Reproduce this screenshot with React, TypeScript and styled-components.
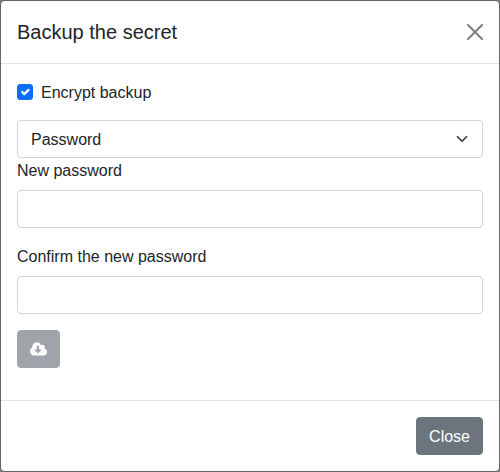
import React, { useState } from "react";
import styled, { createGlobalStyle } from "styled-components";

const GlobalStyle = createGlobalStyle`
  *, *::before, *::after { box-sizing: border-box; }
  body {
    margin: 0;
    background: #7f7f7f;
    color: #212529;
    font: 400 16px/1.5 "Liberation Sans", Arial, sans-serif;
  }
`;

const Dialog = styled.section`
  display: flex;
  flex-direction: column;
  width: 500px;
  height: 472px;
  border: 1px solid rgba(0, 0, 0, 0.2);
  border-radius: 4.8px;
  background: #fff;
  background-clip: padding-box;
`;

const Header = styled.header`
  display: flex;
  align-items: center;
  justify-content: space-between;
  padding: 16px;
  border-bottom: 1px solid #dee2e6;
`;

const Title = styled.h5`
  margin: 0;
  font-size: 20px;
  font-weight: 400;
  line-height: 30px;
`;

const Dismiss = styled.button`
  display: flex;
  padding: 8px;
  margin: -8px;
  border: 0;
  background: transparent;
  color: #000;
  opacity: 0.5;
`;

const Body = styled.div`
  flex: 1;
  padding: 16px;
`;

const Check = styled.label`
  display: flex;
  gap: 8px;
  height: 24px;
  margin-bottom: 16px;
  line-height: 26px;
`;

const HiddenCheckbox = styled.input`
  appearance: none;
  width: 0;
  height: 0;
  margin: 0 -8px 0 0;
`;

const CheckMark = styled.span<{ $checked: boolean }>`
  display: flex;
  width: 16px;
  height: 16px;
  margin-top: 4px;
  border: 1px solid ${(p) => (p.$checked ? "#0d6efd" : "rgba(0,0,0,0.25)")};
  border-radius: 3px;
  background: ${(p) => (p.$checked ? "#0d6efd" : "#fff")};
`;

const SelectBox = styled.div`
  display: grid;
  align-items: center;

  > * { grid-area: 1 / 1; }
  > svg { justify-self: end; margin-right: 13px; pointer-events: none; }
`;

const Select = styled.select`
  appearance: none;
  width: 100%;
  height: 38px;
  padding: 7px 36px 5px 13px;
  border: 1px solid #ced4da;
  border-radius: 4px;
  background: #fff;
  color: #212529;
  font: inherit;
`;

const Field = styled.div`
  display: flex;
  flex-direction: column;
  margin-bottom: 16px;
`;

const Label = styled.label`
  height: 24px;
  margin-bottom: 8px;
  line-height: 26px;
`;

const Input = styled.input`
  height: 38px;
  padding: 6px 12px;
  border: 1px solid #ced4da;
  border-radius: 4px;
  background: #fff;
  font: inherit;
`;

const Button = styled.button`
  display: inline-flex;
  align-items: center;
  justify-content: center;
  height: 38px;
  padding: 7px 12px 5px;
  border: 1px solid #6c757d;
  border-radius: 4px;
  background: #6c757d;
  color: #fff;
  font: inherit;

  &:disabled { opacity: 0.65; }
`;

const DownloadButton = styled(Button)`
  width: 43px;
  padding: 6px 12px;
`;

const DownloadIcon = styled.svg`
  flex: none;
  width: 17px;
  height: 17px;
`;

const Footer = styled.footer`
  display: flex;
  justify-content: flex-end;
  padding: 16px;
  border-top: 1px solid #dee2e6;
`;

export default function App() {
  const [encrypted, setEncrypted] = useState(true);

  return (
    <>
      <GlobalStyle />
      <Dialog role="dialog" aria-labelledby="dialog-title">
        <Header>
          <Title id="dialog-title">Backup the secret</Title>
          <Dismiss type="button" aria-label="Close">
            <svg width="16" height="16" viewBox="0 0 16 16" fill="currentColor">
              <path d="M.293.293a1 1 0 011.414 0L8 6.586 14.293.293a1 1 0 111.414 1.414L9.414 8l6.293 6.293a1 1 0 01-1.414 1.414L8 9.414l-6.293 6.293a1 1 0 01-1.414-1.414L6.586 8 .293 1.707a1 1 0 010-1.414z" />
            </svg>
          </Dismiss>
        </Header>
        <Body>
          <Check>
            <HiddenCheckbox
              type="checkbox"
              checked={encrypted}
              onChange={(e) => setEncrypted(e.target.checked)}
            />
            <CheckMark $checked={encrypted}>
              {encrypted && (
                <svg width="14" height="14" viewBox="0 0 20 20" fill="none">
                  <path d="M6 10l3 3l6-6" stroke="#fff" strokeWidth="3.3" strokeLinecap="round" strokeLinejoin="round" />
                </svg>
              )}
            </CheckMark>
            Encrypt backup
          </Check>
          <SelectBox>
            <Select aria-label="Encryption method" defaultValue="password">
              <option value="password">Password</option>
            </Select>
            <svg width="16" height="12" viewBox="0 0 16 16" fill="none">
              <path d="M2 5l6 6 6-6" stroke="#343a40" strokeWidth="2.2" strokeLinecap="round" strokeLinejoin="round" />
            </svg>
          </SelectBox>
          <Field>
            <Label htmlFor="new-password">New password</Label>
            <Input id="new-password" type="password" />
          </Field>
          <Field>
            <Label htmlFor="confirm-password">Confirm the new password</Label>
            <Input id="confirm-password" type="password" />
          </Field>
          <DownloadButton type="button" disabled aria-label="Download">
            <DownloadIcon viewBox="0 0 1920 1792" preserveAspectRatio="none" fill="currentColor">
              <path d="M1280 928q0-14-9-23t-23-9h-224v-352q0-13-9.5-22.5t-22.5-9.5h-192q-13 0-22.5 9.5t-9.5 22.5v352h-224q-13 0-22.5 9.500t-9.500 22.500q0 14 9 23l352 352q9 9 23 9t23-9l351-351q10-12 10-24zM1920 1152q0 159-112.5 271.500t-271.500 112.500h-1088q-185 0-316.500-131.500t-131.500-316.500q0-130 70-240t188-165q-2-30-2-43 0-212 150-362t362-150q156 0 285.500 87t188.500 231q71-62 166-62 106 0 181 75t75 181q0 76-41 138 130 31 213.500 135.500t83.500 238.500z" fillRule="evenodd" />
            </DownloadIcon>
          </DownloadButton>
        </Body>
        <Footer>
          <Button type="button">Close</Button>
        </Footer>
      </Dialog>
    </>
  );
}
